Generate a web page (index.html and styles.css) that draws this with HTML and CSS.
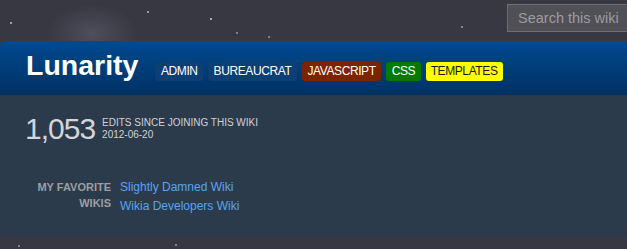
FILE: index.html
```html
<!DOCTYPE html>
<html>
<head>
<meta charset="utf-8">
<link rel="stylesheet" href="styles.css">
</head>
<body>
<div class="page">
  <div class="topbar">
    <div class="search">Search this wiki</div>
  </div>
  <div class="card">
    <div class="card-header">
      <h1 class="title">Lunarity</h1>
      <div class="tags">
        <span class="tag tag-admin">ADMIN</span>
        <span class="tag tag-admin">BUREAUCRAT</span>
        <span class="tag tag-js">JAVASCRIPT</span>
        <span class="tag tag-css">CSS</span>
        <span class="tag tag-tpl">TEMPLATES</span>
      </div>
    </div>
    <div class="card-body">
      <div class="stats">
        <div class="count">1,053</div>
        <div class="count-info">
          <div>EDITS SINCE JOINING THIS WIKI</div>
          <div>2012-06-20</div>
        </div>
      </div>
      <div class="favorites">
        <div class="fav-label">MY FAVORITE<br>WIKIS</div>
        <div class="fav-links">
          <a class="fav-link" href="#">Slightly Damned Wiki</a>
          <a class="fav-link" href="#">Wikia Developers Wiki</a>
        </div>
      </div>
    </div>
  </div>
</div>
</body>
</html>
```

FILE: styles.css
```css
html, body {
  margin: 0;
  padding: 0;
}
body {
  width: 627px;
  height: 249px;
  overflow: hidden;
  font-family: "Liberation Sans", Arial, sans-serif;
  background-color: #383843;
  background-image:
    radial-gradient(circle 1px at 11px 23px, rgba(200,200,210,0.7) 0 1px, transparent 1.5px),
    radial-gradient(circle 1px at 148px 12px, rgba(200,200,210,0.7) 0 1px, transparent 1.5px),
    radial-gradient(circle 1px at 211px 19px, rgba(200,200,210,0.8) 0 1px, transparent 1.5px),
    radial-gradient(circle 1px at 237px 33px, rgba(200,200,210,0.5) 0 1px, transparent 1.5px),
    radial-gradient(circle 1px at 269px 37px, rgba(200,200,210,0.5) 0 1px, transparent 1.5px),
    radial-gradient(circle 1px at 462px 27px, rgba(200,200,210,0.5) 0 1px, transparent 1.5px),
    radial-gradient(circle 1px at 19px 246px, rgba(200,200,210,0.5) 0 1px, transparent 1.5px),
    radial-gradient(circle 1px at 176px 245px, rgba(200,200,210,0.5) 0 1px, transparent 1.5px),
    radial-gradient(ellipse 45px 30px at 92px 34px, rgba(120,120,140,0.35), transparent);
  background-repeat: no-repeat;
}
.page {
  display: flex;
  flex-direction: column;
}
.topbar {
  height: 41px;
  box-sizing: border-box;
  padding-top: 4px;
  display: flex;
  justify-content: flex-end;
}
.search {
  width: 126px;
  height: 28px;
  margin-right: -6px;
  box-sizing: border-box;
  border: 1px solid #6e6e72;
  background: #505056;
  color: #9c9c9e;
  font-size: 14.5px;
  line-height: 26px;
  padding-left: 10px;
  white-space: nowrap;
}
.card {
  display: flex;
  flex-direction: column;
}
.card-header {
  height: 54px;
  box-sizing: border-box;
  padding: 10px 0 0 26px;
  border-top-left-radius: 5px;
  background: linear-gradient(#004a8f, #003163);
  display: flex;
  align-items: baseline;
}
.title {
  margin: 0 17px 0 0;
  font-size: 28.5px;
  line-height: 28px;
  font-weight: bold;
  color: #ffffff;
}
.tags {
  display: flex;
  gap: 5px;
  align-items: baseline;
}
.tag {
  font-size: 12px;
  letter-spacing: -0.4px;
  line-height: 15px;
  padding: 2px 5.5px;
  border-radius: 3px;
  color: #ffffff;
}
.tag-admin { background: #0e3f74; }
.tag-js { background: #7a2400; }
.tag-css { background: #007a00; }
.tag-tpl { background: #ffff00; color: #1a1a00; padding: 2px 5px; }
.card-body {
  height: 142px;
  box-sizing: border-box;
  padding: 19px 0 0 25px;
  background: #2c3b4b;
  border-bottom-left-radius: 5px;
}
.stats {
  display: flex;
  align-items: flex-start;
}
.count {
  font-size: 30px;
  line-height: 30px;
  letter-spacing: -1px;
  color: #d4d5d8;
}
.count-info {
  margin: 3px 0 0 7px;
  font-size: 10px;
  line-height: 12px;
  color: #d0d2d6;
}
.favorites {
  display: flex;
  margin-top: 34px;
}
.fav-label {
  width: 86px;
  text-align: right;
  font-size: 11px;
  font-weight: bold;
  line-height: 16px;
  padding-top: 1px;
  color: #9c9ea2;
}
.fav-links {
  display: flex;
  flex-direction: column;
  margin-left: 9px;
}
.fav-link {
  font-size: 12px;
  line-height: 19px;
  color: #5aa4ef;
  text-decoration: none;
}
```
